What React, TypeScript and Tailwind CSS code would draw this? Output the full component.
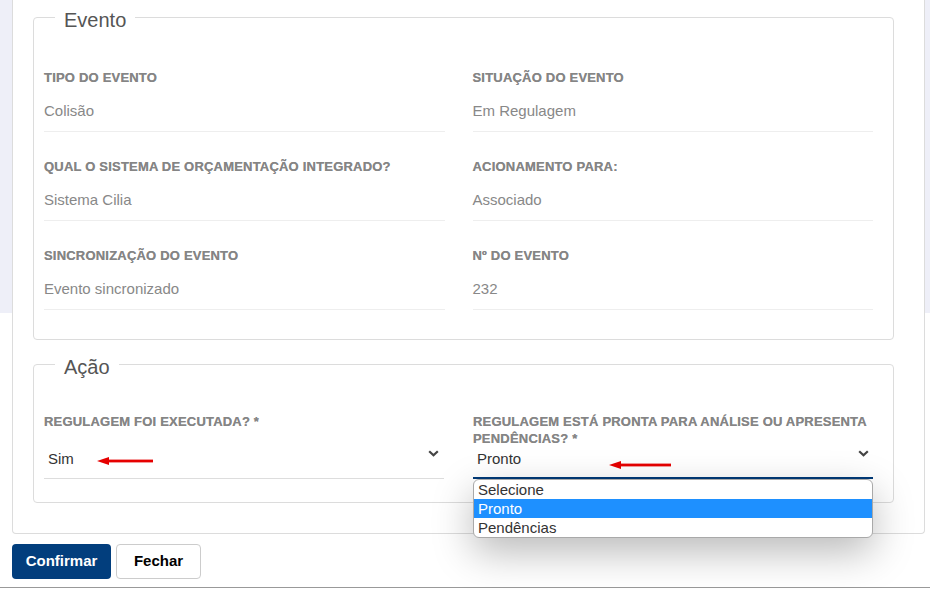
import React from 'react';

const FONT = { fontFamily: '"Liberation Sans", Arial, sans-serif' };

type Info = { label: string; value: string };

const EVENT_INFO: Info[] = [
  { label: 'Tipo do evento', value: 'Colisão' },
  { label: 'Situação do evento', value: 'Em Regulagem' },
  { label: 'Qual o sistema de orçamentação integrado?', value: 'Sistema Cilia' },
  { label: 'Acionamento para:', value: 'Associado' },
  { label: 'Sincronização do evento', value: 'Evento sincronizado' },
  { label: 'Nº do evento', value: '232' },
];

const OPTIONS = ['Selecione', 'Pronto', 'Pendências'];

function Label({ children }: { children: React.ReactNode }) {
  return (
    <div className="text-[13px] font-bold uppercase leading-[17px] tracking-[0.2px] text-[#858585] [text-shadow:0_0_0.6px_#999]">
      {children}
    </div>
  );
}

function Chevron() {
  return (
    <svg width="11" height="7" viewBox="0 0 11 7">
      <path d="M1.2 1.2 L5.5 5.3 L9.8 1.2" fill="none" stroke="#444" strokeWidth="2.2" />
    </svg>
  );
}

function RedArrow({ width }: { width: number }) {
  return (
    <svg width={width} height="10" viewBox={`0 0 ${width} 10`}>
      <path d="M0 5 L12 1 L12 9 Z" fill="#e60000" />
      <rect x="10" y="3.6" width={width - 10} height="2.8" fill="#e60000" />
    </svg>
  );
}

function Legend({ children }: { children: React.ReactNode }) {
  return (
    <legend className="ml-[11px] px-[9px] pt-[6px] text-[20px] leading-[23px] text-[#555]">
      {children}
    </legend>
  );
}

export default function App() {
  return (
    <div
      className="h-[590px] w-[930px] overflow-hidden bg-[linear-gradient(#eeeff8_313px,#ffffff_313px)]"
      style={FONT}
    >
      {/* modal body */}
      <div className="ml-[12px] mr-[5px] rounded-b-[4px] border-x border-b border-[#dcdcdc] bg-white pl-[20px] pr-[30px] pt-[3px] pb-[30px]">
        <fieldset className="rounded-[4px] border border-[#dcdcdc] pl-[10px] pr-[20px] pb-[29px]">
          <Legend>Evento</Legend>
          <div className="grid grid-cols-2 gap-x-[28px] gap-y-[26px] pt-[37px]">
            {EVENT_INFO.map((item) => (
              <div key={item.label} className="border-b border-[#eeeeee] pb-[12px]">
                <Label>{item.label}</Label>
                <div className="mt-[16px] text-[15px] leading-[17px] text-[#888]">{item.value}</div>
              </div>
            ))}
          </div>
        </fieldset>

        <fieldset className="mt-[10px] rounded-[4px] border border-[#dcdcdc] pl-[10px] pr-[20px] pb-[23px]">
          <Legend>Ação</Legend>
          <div className="grid grid-cols-2 gap-x-[29px] pt-[34px]">
            <div className="flex flex-col">
              <Label>Regulagem foi executada? *</Label>
              <div className="relative mt-auto flex h-[32px] items-start justify-between border-b border-[#dddddd] pl-[4px] pr-[5px] pt-[3px]">
                <span className="text-[15px] leading-[17px] text-[#333]">Sim</span>
                <Chevron />
                <div className="absolute left-[53px] top-[9px]">
                  <RedArrow width={56} />
                </div>
              </div>
            </div>

            <div className="flex flex-col">
              <Label>Regulagem está pronta para análise ou apresenta pendências? *</Label>
              <div className="relative mt-auto flex h-[32px] items-start justify-between border-b-2 border-[#003a78] pl-[4px] pr-[4px] pt-[3px]">
                <span className="text-[15px] leading-[17px] text-[#333]">Pronto</span>
                <Chevron />
                <div className="absolute left-[136px] top-[13px]">
                  <RedArrow width={62} />
                </div>
                {/* open native list */}
                <ul className="absolute left-0 top-[calc(100%+2px)] z-10 w-full overflow-hidden rounded-[6px] border border-[#a9a9a9] bg-white text-[15px] leading-[19px] text-[#333] shadow-[0_14px_40px_rgba(0,0,0,0.28)]">
                  {OPTIONS.map((opt) => (
                    <li
                      key={opt}
                      className={
                        opt === 'Pronto'
                          ? 'bg-[#1e90ff] px-[4px] text-white'
                          : 'px-[4px]'
                      }
                    >
                      {opt}
                    </li>
                  ))}
                </ul>
              </div>
            </div>
          </div>
        </fieldset>
      </div>

      <div className="ml-[12px] mt-[10px] flex gap-[5px]">
        <button className="h-[35px] w-[99px] rounded-[4px] bg-[#023e7d] text-[15px] font-bold text-white">
          Confirmar
        </button>
        <button className="h-[35px] w-[85px] rounded-[4px] border border-[#cccccc] bg-white text-[15px] font-bold text-black">
          Fechar
        </button>
      </div>

      <div className="mt-[8px] border-t border-[#999] pl-[2px] pt-[1px] text-[15px] font-bold leading-[18px] text-[#222]">
        Regulamentação realizada em: 10/10/2023
      </div>
    </div>
  );
}
